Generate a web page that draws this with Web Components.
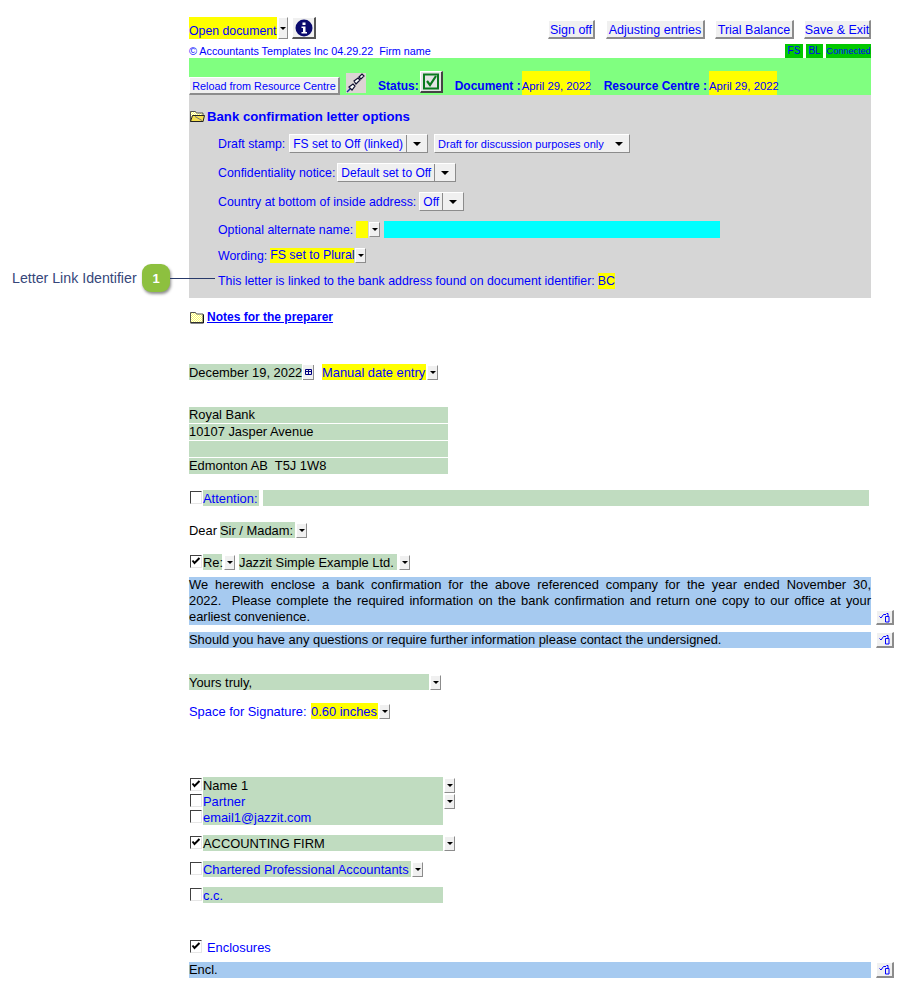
<!DOCTYPE html>
<html>
<head>
<meta charset="utf-8">
<title>Bank confirmation letter</title>
<style>
  html, body { margin: 0; padding: 0; background: #fff; }
  body { font-family: "Liberation Sans", Arial, sans-serif; }
</style>
</head>
<body>
<letter-page></letter-page>

<script>
// small raised button, the text comes through the slot
class WinButton extends HTMLElement {
    constructor() {
        super();
        this.attachShadow({mode: 'open'}).innerHTML = `
            <style>
                :host {
                    display: inline-flex;
                    align-items: center;
                    justify-content: center;
                    box-sizing: border-box;
                    height: 19px;
                    background: #f0f0f0;
                    color: #0000ff;
                    font-size: 12.5px;
                    white-space: nowrap;
                    padding-top: 1px;
                    border-top: 1px solid #fff;
                    border-left: 1px solid #fff;
                    border-right: 2px solid #8c8c8c;
                    border-bottom: 2px solid #8c8c8c;
                }
            </style>
            <slot></slot>`;
    }
}

// the little arrow button next to a field
class DropCaret extends HTMLElement {
    constructor() {
        super();
        this.attachShadow({mode: 'open'}).innerHTML = `
            <style>
                :host {
                    display: inline-flex;
                    align-items: center;
                    justify-content: center;
                    box-sizing: border-box;
                    flex: none;
                    width: 11px;
                    height: 15px;
                    background: #f0f0f0;
                    border-top: 1px solid #fff;
                    border-left: 1px solid #fff;
                    border-right: 1px solid #8c8c8c;
                    border-bottom: 1px solid #8c8c8c;
                }
                i { width: 0; height: 0; border: 3px solid transparent; border-top: 3px solid #000; border-bottom: 0; }
            </style>
            <i></i>`;
    }
}

// value box with a separated arrow, used in the grey options panel
class PanelSelect extends HTMLElement {
    constructor() {
        super();
        this.attachShadow({mode: 'open'}).innerHTML = `
            <style>
                :host {
                    display: inline-flex;
                    box-sizing: border-box;
                    height: 19px;
                    background: #f0f0f0;
                    color: #0000ff;
                    font-size: 12px;
                    white-space: nowrap;
                    border-top: 1px solid #fff;
                    border-left: 1px solid #fff;
                    border-right: 1px solid #8c8c8c;
                    border-bottom: 1px solid #8c8c8c;
                }
                span { display: flex; align-items: center; padding: 0 3px; flex: 1; }
                b {
                    flex: none;
                    display: flex;
                    align-items: center;
                    justify-content: center;
                    width: 20px;
                    border-left: 1px solid #8c8c8c;
                }
                :host([plain]) b { border-left: 0; }
                i { width: 0; height: 0; border: 4px solid transparent; border-top: 4px solid #000; border-bottom: 0; }
            </style>
            <span><slot></slot></span><b><i></i></b>`;
    }
}

// checkbox drawn the way the old form renderer shows it
class TickBox extends HTMLElement {
    constructor() {
        super();
        const on = this.hasAttribute('checked');
        this.attachShadow({mode: 'open'}).innerHTML = `
            <style>
                :host {
                    display: inline-block;
                    box-sizing: border-box;
                    flex: none;
                    width: 12px;
                    height: 13px;
                    margin: 1px 1px 0 1px;
                    align-self: flex-start;
                    border-top: 1px solid #404040;
                    border-left: 1px solid #404040;
                    border-right: 1px solid #e6e6e6;
                    border-bottom: 1px solid #e6e6e6;
                    background: #fff;
                }
                svg { display: block; }
            </style>
            ${on ? '<svg width="10" height="11" viewBox="0 0 10 11"><path d="M1.5 4.5l2 2.5L8.5 2" fill="none" stroke="#000" stroke-width="2"/></svg>' : ''}`;
    }
}

// blue "insert" tile at the end of the paragraphs
class ReturnTile extends HTMLElement {
    constructor() {
        super();
        this.attachShadow({mode: 'open'}).innerHTML = `
            <style>
                :host {
                    display: inline-block;
                    box-sizing: border-box;
                    flex: none;
                    width: 18px;
                    height: 16px;
                    background: #f0f0f0;
                    border-top: 1px solid #fff;
                    border-left: 1px solid #fff;
                    border-right: 2px solid #8c8c8c;
                    border-bottom: 2px solid #8c8c8c;
                }
                svg { display: block; }
            </style>
            <svg width="15" height="13" viewBox="0 0 15 13">
                <path d="M2.5 5.5l1.5 1.5l2.5-3.5h2.5" fill="none" stroke="#0000ff" stroke-width="1"/>
                <path d="M8.5 5.5h3.5v5.5h-3.5zM9.5 2.5h1.5v3" fill="none" stroke="#0000ff" stroke-width="1"/>
            </svg>`;
    }
}

class FolderIcon extends HTMLElement {
    constructor() {
        super();
        const open = this.hasAttribute('open');
        const id = open ? 'dotOpen' : 'dotShut';
        this.attachShadow({mode: 'open'}).innerHTML = `
            <style>
                :host { display: inline-block; flex: none; width: 16px; height: 14px; }
                svg { display: block; }
            </style>
            <svg width="16" height="14" viewBox="0 0 16 14">
                <defs>
                    <pattern id="${id}" width="2" height="2" patternUnits="userSpaceOnUse">
                        <rect width="2" height="2" fill="#ffff66"/>
                        <rect width="1" height="1" fill="#fff"/>
                        <rect x="1" y="1" width="1" height="1" fill="#fff"/>
                    </pattern>
                </defs>
                <path d="M1.5 2.5h5l1 1.5h6.5v8.5h-12.5z" fill="url(#${id})" stroke="#555" stroke-width="1"/>
                ${open ? '<path d="M1.5 12.5l2-6h12l-1.5 6z" fill="#f5e050" stroke="#222" stroke-width="1"/><path d="M6 7.5l7 4" stroke="#777" stroke-width="1"/>' : '<path d="M14.5 4.5v8.5h-13" fill="none" stroke="#111" stroke-width="1"/>'}
            </svg>`;
    }
}

// number marker with its leader line, sits over the panel
class CallOut extends HTMLElement {
    constructor() {
        super();
        this.attachShadow({mode: 'open'}).innerHTML = `
            <style>
                :host {
                    position: absolute;
                    left: 12px;
                    top: 264px;
                    display: flex;
                    align-items: center;
                    width: 203px;
                    height: 28px;
                    color: #36467a;
                    font-size: 14.2px;
                    white-space: nowrap;
                }
                .badge {
                    box-sizing: border-box;
                    position: absolute;
                    left: 130px;
                    top: 0;
                    display: flex;
                    align-items: center;
                    justify-content: center;
                    width: 28px;
                    height: 28px;
                    border-radius: 9px;
                    background: #8dc03f;
                    color: #fff;
                    font-size: 13px;
                    font-weight: bold;
                    box-shadow: 1px 2px 3px rgba(0,0,0,.45);
                }
                .line { position: absolute; left: 158px; top: 14px; width: 45px; height: 1px; background: #283a6a; }
            </style>
            <slot></slot><span class="badge">1</span><span class="line"></span>`;
    }
}

class LetterPage extends HTMLElement {
    constructor() {
        super();
        const root = document.createElement('template');
        root.innerHTML = LetterPage.#Template;
        this.attachShadow({mode: 'open'}).append(root.content.cloneNode(true));
    }

    static get #Template() {
        return `
            <style>
                :host {
                    display: block;
                    box-sizing: border-box;
                    position: relative;
                    width: 908px;
                    height: 1000px;
                    overflow: hidden;
                    padding: 17px 0 0 189px;
                    color: #0000ff;
                    font-family: "Liberation Sans", Arial, sans-serif;
                    font-size: 12.9px;
                }
                .sheet { width: 682px; }
                .row { display: flex; align-items: center; height: 16px; white-space: nowrap; }
                .y { background: #ffff00; }
                .g { background: #c0dcc0; }
                .k { color: #000; }
                .cell { display: flex; align-items: center; height: 100%; flex: none; }

                .top { display: flex; justify-content: space-between; height: 22px; }
                .top .left { display: flex; gap: 1px; }
                .open-doc { display: flex; align-items: flex-end; height: 22px; width: 88px; background: #ff0; padding-bottom: 1px; box-sizing: border-box; font-size: 12.3px; white-space: nowrap; }
                .info {
                    box-sizing: border-box;
                    display: flex; align-items: center; justify-content: center;
                    width: 24px; height: 22px; margin-left: 3px;
                    background: #f0f0f0;
                    border-top: 1px solid #fff; border-left: 1px solid #fff;
                    border-right: 2px solid #555; border-bottom: 2px solid #555;
                }
                .top .right { display: flex; gap: 10px; align-items: flex-end; }

                .meta { display: flex; justify-content: space-between; align-items: flex-end; height: 19px; font-size: 10.8px; white-space: nowrap; }
                .meta .badges { display: flex; gap: 3px; font-size: 10px; }
                .meta .badges span { box-sizing: border-box; height: 14px; line-height: 14px; background: #00c800; color: #0000ff; text-align: center; }

                .band { display: flex; align-items: flex-end; height: 37px; background: #80ff80; font-weight: bold; font-size: 12px; }
                .date { display: flex; align-items: flex-end; height: 24px; padding-bottom: 3px; background: #ff0; font-size: 11.3px; font-weight: normal; width: 68px; box-sizing: border-box; white-space: nowrap; }
                .band win-button { font-size: 10.8px; font-weight: normal; width: 151px; height: 18px; }
                .band .lbl { align-self: flex-end; height: 18px; display: flex; align-items: center; white-space: nowrap; }
                .link-tile { width: 20px; height: 20px; margin: 0 12px 2px 6px; background: #dcd4d4; }
                .link-tile svg { display: block; }
                .status-tile {
                    box-sizing: border-box;
                    width: 23px; height: 22px; margin: 0 12px 2px 1px;
                    background: #e4e4e4;
                    border-top: 1px solid #fff; border-left: 1px solid #fff;
                    border-right: 2px solid #444; border-bottom: 2px solid #444;
                }
                .status-tile svg { display: block; }

                .panel { box-sizing: border-box; height: 203px; background: #d6d6d6; padding-left: 29px; font-size: 12.35px; }
                .panel .line { display: flex; align-items: center; height: 19px; white-space: nowrap; margin-top: 10px; }
                .panel h2 {
                    display: flex; align-items: center; gap: 2px;
                    height: 14px; margin: 0 0 11px -29px; padding-top: 14px;
                    font-size: 13.2px; font-weight: bold;
                }
                .panel panel-select { margin-left: 4px; }
                .cyan { width: 336px; height: 17px; background: #00ffff; margin-left: 4px; }

                .notes { display: flex; align-items: center; gap: 2px; height: 16px; margin-top: 11px; font-weight: bold; font-size: 12px; }
                .notes u { display: block; }
                .para { box-sizing: border-box; width: 682px; flex: none; line-height: 16px; text-align: justify; color: #000; background: #a6caf0; }
                .para .full { text-align-last: justify; white-space: nowrap; }
                .with-tile { display: flex; align-items: flex-end; width: 705px; gap: 5px; margin-top: 7px; }
                .addr { width: 259px; }
                .addr div { height: 16px; line-height: 16px; margin-bottom: 1px; background: #c0dcc0; color: #000; white-space: pre; }
                .sig { display: grid; grid-template-columns: 14px 240px 12px; grid-auto-rows: 16px; align-items: center; }
                .sig .g { height: 16px; display: flex; align-items: center; }
                .sig drop-caret { margin-left: 1px; }
            </style>

            <call-out>Letter Link Identifier</call-out>

            <div class="sheet">
                <div class="top">
                    <div class="left">
                        <div class="open-doc">Open document</div>
                        <drop-caret style="height:22px;width:10px;"></drop-caret>
                        <div class="info">
                            <svg width="18" height="18" viewBox="0 0 18 18"><circle cx="9" cy="9" r="8.5" fill="#0a0a6e"/><rect x="7.5" y="3.5" width="3" height="2.5" fill="#fff"/><path d="M6.5 7.5h4v5.5h1.5v1.5h-5.5V13h1.5V9h-1.5z" fill="#fff"/></svg>
                        </div>
                    </div>
                    <div class="right">
                        <win-button style="width:47px;">Sign off</win-button>
                        <win-button style="width:99px;margin-left:1px;">Adjusting entries</win-button>
                        <win-button style="width:79px;">Trial Balance</win-button>
                        <win-button style="width:67px;">Save &amp; Exit</win-button>
                    </div>
                </div>

                <div class="meta">
                    <span style="padding-bottom:1px;">© Accountants Templates Inc 04.29.22&nbsp; Firm name</span>
                    <span class="badges"><span style="width:18px;">FS</span><span style="width:17px;">BL</span><span style="width:45px;font-size:9.2px;">Connected</span></span>
                </div>

                <div class="band">
                    <win-button>Reload from Resource Centre</win-button>
                    <div class="link-tile">
                        <svg width="20" height="20" viewBox="0 0 20 20">
                            <path d="M1 19l4-4" stroke="#1a2a9a" stroke-width="1.5"/>
                            <path d="M3 14l4-3l2 2l-3 4zM8 8l4-3l2 2l-4 4zM13 4l3-3l2 2l-3 3z" fill="#fff" stroke="#101030" stroke-width="1.2"/>
                        </svg>
                    </div>
                    <span class="lbl">Status:</span>
                    <div class="status-tile">
                        <svg width="20" height="19" viewBox="0 0 20 19">
                            <rect x="3" y="2.5" width="14" height="14" fill="#e4e4e4" stroke="#0a7a1e" stroke-width="2"/>
                            <path d="M6 9l3 4l6-9" fill="none" stroke="#0a7a1e" stroke-width="2.2"/>
                        </svg>
                    </div>
                    <span class="lbl">Document :</span>
                    <span class="date" style="margin-left:1px;margin-right:14px;">April 29, 2022</span>
                    <span class="lbl">Resource Centre :</span>
                    <span class="date" style="margin-left:2px;">April 29, 2022</span>
                </div>

                <div class="panel">
                    <h2><folder-icon open></folder-icon>Bank confirmation letter options</h2>
                    <div class="line">Draft stamp:<panel-select>FS set to Off (linked)</panel-select><panel-select plain style="width:196px;margin-left:6px;font-size:11px;">Draft for discussion purposes only</panel-select></div>
                    <div class="line">Confidentiality notice:<panel-select style="margin-left:2px;">Default set to Off</panel-select></div>
                    <div class="line">Country at bottom of inside address:<panel-select style="margin-left:3px;">Off</panel-select></div>
                    <div class="line" style="height:17px;">Optional alternate name:<span class="y" style="width:12px;height:17px;margin-left:3px;"></span><drop-caret style="margin-left:1px;"></drop-caret><span class="cyan"></span></div>
                    <div class="line" style="height:15px;">Wording:<span class="y" style="margin-left:3px;height:15px;line-height:15px;width:84px;">FS set to Plural</span><drop-caret style="margin-left:1px;"></drop-caret></div>
                    <div class="line" style="height:16px;">This letter is linked to the bank address found on document identifier:<span class="y" style="margin-left:3px;height:16px;line-height:16px;width:17px;text-align:center;">BC</span></div>
                </div>

                <div class="notes"><folder-icon></folder-icon><u>Notes for the preparer</u></div>

                <div class="row" style="margin-top:39px;">
                    <span class="cell g k" style="width:113px;">December 19, 2022</span>
                    <span style="width:11px;height:15px;margin-left:1px;background:#f0f0f0;display:flex;align-items:center;justify-content:center;border-right:1px solid #8c8c8c;border-bottom:1px solid #8c8c8c;box-sizing:border-box;">
                        <svg width="7" height="6" viewBox="0 0 7 6"><path d="M.5.5h6v5h-6zM.5 2.5h6M3.5 .5v5" fill="none" stroke="#000080" stroke-width="1"/></svg>
                    </span>
                    <span class="cell y" style="margin-left:8px;width:104px;">Manual date entry</span>
                    <drop-caret style="margin-left:1px;"></drop-caret>
                </div>

                <div class="addr" style="margin-top:27px;">
                    <div>Royal Bank</div>
                    <div>10107 Jasper Avenue</div>
                    <div></div>
                    <div>Edmonton AB  T5J 1W8</div>
                </div>

                <div class="row" style="margin-top:16px;">
                    <tick-box></tick-box>
                    <span class="cell g" style="width:56px;">Attention:</span>
                    <span class="cell g" style="width:606px;margin-left:4px;"></span>
                </div>

                <div class="row k" style="margin-top:16px;">
                    <span style="width:31px;">Dear</span><span class="cell g" style="width:75px;">Sir / Madam:</span>
                    <drop-caret style="margin-left:1px;"></drop-caret>
                </div>

                <div class="row k" style="margin-top:16px;">
                    <tick-box checked></tick-box>
                    <span class="cell g" style="width:19px;">Re:</span>
                    <drop-caret style="margin-left:2px;"></drop-caret>
                    <span class="cell g" style="width:158px;margin-left:4px;">Jazzit Simple Example Ltd.</span>
                    <drop-caret style="margin-left:2px;"></drop-caret>
                </div>

                <div class="with-tile">
                    <div class="para">
                        <div class="full">We herewith enclose a bank confirmation for the above referenced company for the year ended November 30,</div>
                        <div class="full">2022.&nbsp; Please complete the required information on the bank confirmation and return one copy to our office at your</div>
                        <div>earliest convenience.</div>
                    </div>
                    <return-tile style="height:15px;"></return-tile>
                </div>
                <div class="with-tile">
                    <div class="para">Should you have any questions or require further information please contact the undersigned.</div>
                    <return-tile></return-tile>
                </div>

                <div class="row" style="margin-top:26px;">
                    <span class="cell g k" style="width:240px;">Yours truly,</span>
                    <drop-caret style="margin-left:1px;"></drop-caret>
                </div>

                <div class="row" style="margin-top:13px;">
                    <span style="width:122px;">Space for Signature:</span><span class="cell y" style="width:67px;">0.60 inches</span>
                    <drop-caret style="margin-left:1px;"></drop-caret>
                </div>

                <div class="sig" style="margin-top:58px;">
                    <tick-box checked></tick-box><span class="g k">Name 1</span><drop-caret></drop-caret>
                    <tick-box></tick-box><span class="g">Partner</span><drop-caret></drop-caret>
                    <tick-box></tick-box><span class="g">email1@jazzit.com</span><span></span>
                </div>

                <div class="row k" style="margin-top:10px;">
                    <tick-box checked></tick-box>
                    <span class="cell g" style="width:240px;">ACCOUNTING FIRM</span>
                    <drop-caret style="margin-left:1px;"></drop-caret>
                </div>

                <div class="row" style="margin-top:10px;">
                    <tick-box></tick-box>
                    <span class="cell g" style="width:208px;">Chartered Professional Accountants</span>
                    <drop-caret style="margin-left:1px;"></drop-caret>
                </div>

                <div class="row" style="margin-top:10px;">
                    <tick-box></tick-box>
                    <span class="cell g" style="width:240px;">c.c.</span>
                </div>

                <div class="row" style="margin-top:36px;">
                    <tick-box checked></tick-box>
                    <span style="margin-left:4px;">Enclosures</span>
                </div>

                <div class="with-tile">
                    <div class="para">Encl.</div>
                    <return-tile></return-tile>
                </div>
            </div>`;
    }
}

customElements.define('win-button', WinButton);
customElements.define('drop-caret', DropCaret);
customElements.define('panel-select', PanelSelect);
customElements.define('tick-box', TickBox);
customElements.define('return-tile', ReturnTile);
customElements.define('folder-icon', FolderIcon);
customElements.define('call-out', CallOut);
customElements.define('letter-page', LetterPage);
</script>
</body>
</html>
